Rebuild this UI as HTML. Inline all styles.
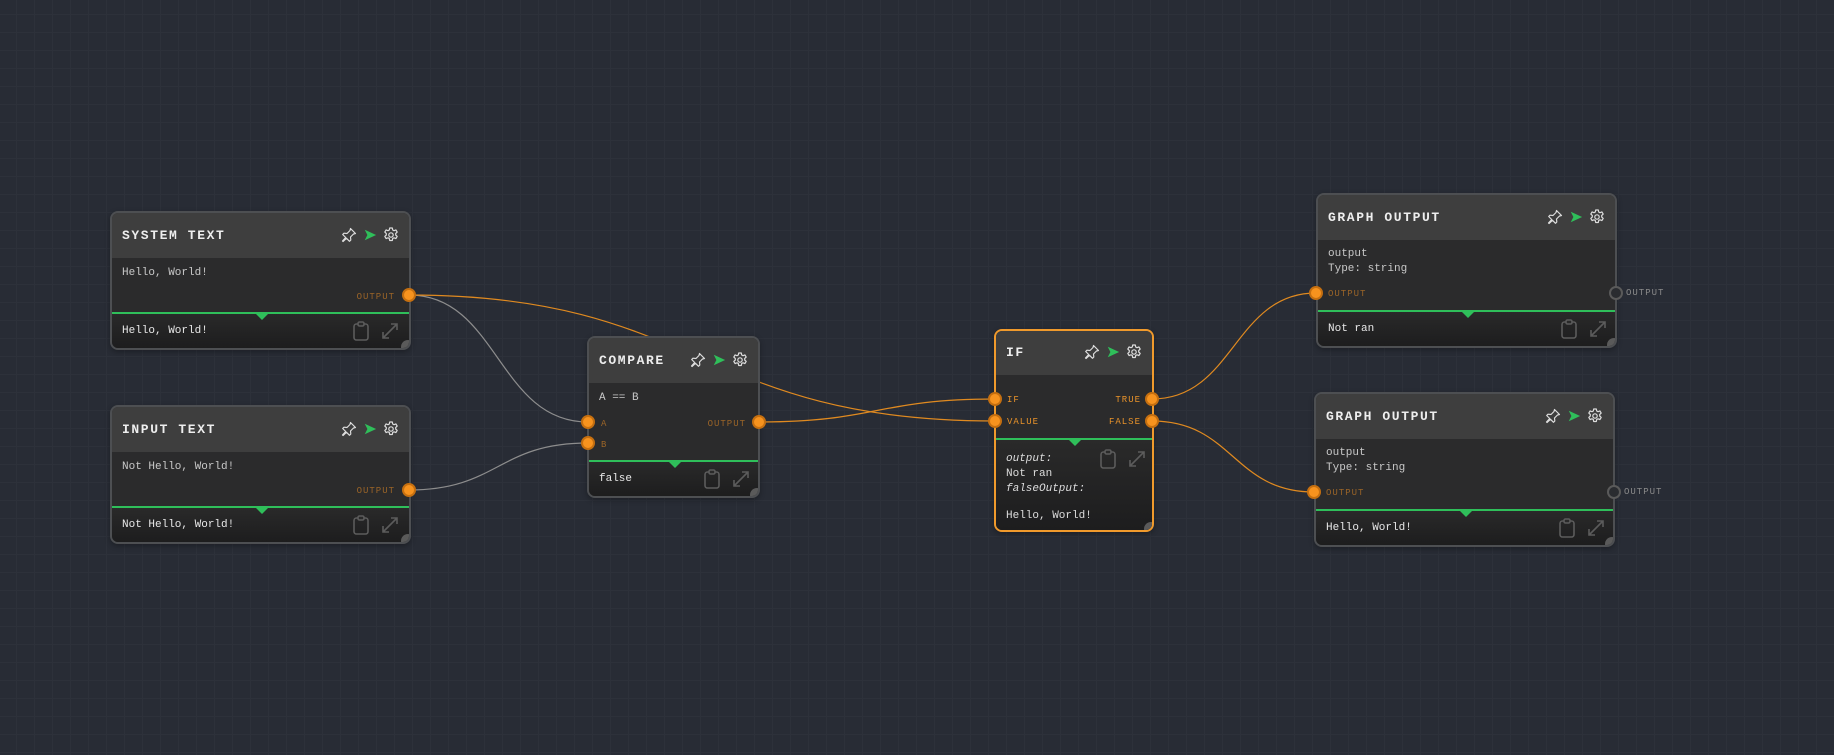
<!DOCTYPE html>
<html><head><meta charset="utf-8"><style>
*{margin:0;padding:0;box-sizing:border-box}
body{width:1834px;height:755px;overflow:hidden;background:#282c35;font-family:"Liberation Mono","DejaVu Sans Mono",monospace;position:relative;
background-image:linear-gradient(#2d313a 1px,transparent 1px),linear-gradient(90deg,#2d313a 1px,transparent 1px);background-size:18px 18px;background-position:-2px -4px}
.n{position:absolute;border:2px solid #4d4f52;border-radius:8px;background:#2b2b2c;overflow:hidden;box-shadow:0 2px 6px rgba(0,0,0,.3)}
.n.sel{border-color:#f09a2c}
.h{position:absolute;left:0;right:0;top:0;background:#3e3e3e}
.t{position:absolute;left:10px;color:#eee;font-weight:bold;font-size:13px;letter-spacing:1.6px}
.ic{position:absolute;right:10px;display:flex;gap:6px;align-items:center}
.tx{position:absolute;left:10px;color:#c8c8c8;font-size:11px;line-height:15px}
.pl{position:absolute;font-size:9px;letter-spacing:1px;color:#9a6428}
.g{position:absolute;left:0;right:0;height:2px;background:#2fbf5a}
.tri{position:absolute;width:0;height:0;border-left:7px solid transparent;border-right:7px solid transparent;border-top:7px solid #2fbf5a}
.f{position:absolute;left:0;right:0;bottom:0;background:linear-gradient(#2a2a2a,#1d1d1e)}
.ft{position:absolute;left:10px;color:#e8e8e8;font-size:11px}
.rs{position:absolute;right:-6px;bottom:-6px;width:14px;height:14px;border-radius:50%;background:#5a5a5a}
.p{position:absolute;width:14px;height:14px;border-radius:50%;background:#f7931e;border:2px solid #c56f10}
.pe{position:absolute;width:14px;height:14px;border-radius:50%;border:2px solid #5a5a5a;background:#2a2c30}
.fi{position:absolute;display:flex;gap:12px;align-items:center}
</style></head><body>
<svg width="1834" height="755" style="position:absolute;left:0;top:0" fill="none" stroke-width="1.2">
<path d="M409 295 C498 295 498 422 588 422" stroke="#8d8d8d"/>
<path d="M409 490 C498 490 498 443 588 443" stroke="#8d8d8d"/>
<path d="M409 295 C700 295 700 421 995 421" stroke="#e08a20"/>
<path d="M759 422 C877 422 877 399 995 399" stroke="#e08a20"/>
<path d="M1152 399 C1234 399 1234 293 1316 293" stroke="#e08a20"/>
<path d="M1152 421 C1233 421 1233 492 1314 492" stroke="#e08a20"/>
</svg>

<svg width="0" height="0" style="position:absolute"><defs>
<symbol id="pin" viewBox="0 0 16 16"><path d="M9.5 1.5l5 5-2 .5-3 3 .3 3-1.3 1.3-3-3L2 14.5l-.5-.5 3.2-3.5-3-3L3 6.2l3 .3 3-3z" fill="none" stroke="#ddd" stroke-width="1.2" stroke-linejoin="round"/></symbol>
<symbol id="play" viewBox="0 0 16 16"><path d="M2 2l13 6-13 6 3-6z" fill="#2fbf5a"/></symbol>
<symbol id="gear" viewBox="0 0 16 16"><path d="M6.7 1h2.6l.4 2 1.3.7 1.9-.8 1.3 2.2-1.5 1.4v1.5l1.5 1.4-1.3 2.2-1.9-.8-1.3.7-.4 2H6.7l-.4-2-1.3-.7-1.9.8-1.3-2.2 1.5-1.4V6.5L1.8 5.1l1.3-2.2 1.9.8 1.3-.7z" fill="none" stroke="#ddd" stroke-width="1.2" stroke-linejoin="round"/><circle cx="8" cy="8" r="2.2" fill="none" stroke="#ddd" stroke-width="1.2"/></symbol>
<symbol id="clip" viewBox="0 0 16 20"><rect x="1" y="3" width="14" height="16" rx="2.5" fill="none" stroke="#5c5c5c" stroke-width="1.6"/><rect x="5" y="1" width="6" height="4" rx="1.5" fill="#2a2a2a" stroke="#5c5c5c" stroke-width="1.6"/></symbol>
<symbol id="exp" viewBox="0 0 18 18"><path d="M2 16L16 2M10 2h6v6M2 10v6h6" fill="none" stroke="#5c5c5c" stroke-width="1.6"/></symbol>
</defs></svg>

<!-- SYSTEM TEXT -->
<div class="n" style="left:110px;top:211px;width:301px;height:139px">
 <div class="h" style="height:45px"><div class="t" style="top:15px">SYSTEM TEXT</div>
 <div class="ic" style="top:14px"><svg width="16" height="16"><use href="#pin"/></svg><svg width="14" height="14"><use href="#play"/></svg><svg width="16" height="16"><use href="#gear"/></svg></div></div>
 <div class="tx" style="top:53px">Hello, World!</div>
 <div class="pl" style="right:14px;top:79px">OUTPUT</div>
 <div class="f" style="top:100px"><div class="ft" style="top:12px">Hello, World!</div>
 <div class="fi" style="right:10px;top:8px"><svg width="16" height="20"><use href="#clip"/></svg><svg width="18" height="18"><use href="#exp"/></svg></div></div>
 <div class="g" style="top:99px"></div><div class="tri" style="left:143px;top:100px"></div>
 <div class="rs"></div>
</div>
<div class="p" style="left:402px;top:288px"></div>

<!-- INPUT TEXT -->
<div class="n" style="left:110px;top:405px;width:301px;height:139px">
 <div class="h" style="height:45px"><div class="t" style="top:15px">INPUT TEXT</div>
 <div class="ic" style="top:14px"><svg width="16" height="16"><use href="#pin"/></svg><svg width="14" height="14"><use href="#play"/></svg><svg width="16" height="16"><use href="#gear"/></svg></div></div>
 <div class="tx" style="top:53px">Not Hello, World!</div>
 <div class="pl" style="right:14px;top:79px">OUTPUT</div>
 <div class="f" style="top:100px"><div class="ft" style="top:12px">Not Hello, World!</div>
 <div class="fi" style="right:10px;top:8px"><svg width="16" height="20"><use href="#clip"/></svg><svg width="18" height="18"><use href="#exp"/></svg></div></div>
 <div class="g" style="top:99px"></div><div class="tri" style="left:143px;top:100px"></div>
 <div class="rs"></div>
</div>
<div class="p" style="left:402px;top:483px"></div>

<!-- COMPARE -->
<div class="n" style="left:587px;top:336px;width:173px;height:162px">
 <div class="h" style="height:45px"><div class="t" style="top:15px">COMPARE</div>
 <div class="ic" style="top:14px"><svg width="16" height="16"><use href="#pin"/></svg><svg width="14" height="14"><use href="#play"/></svg><svg width="16" height="16"><use href="#gear"/></svg></div></div>
 <div class="tx" style="top:53px">A == B</div>
 <div class="pl" style="left:12px;top:81px">A</div>
 <div class="pl" style="left:12px;top:102px">B</div>
 <div class="pl" style="right:12px;top:81px">OUTPUT</div>
 <div class="f" style="top:123px"><div class="ft" style="top:12px">false</div>
 <div class="fi" style="right:8px;top:8px"><svg width="16" height="20"><use href="#clip"/></svg><svg width="18" height="18"><use href="#exp"/></svg></div></div>
 <div class="g" style="top:122px"></div><div class="tri" style="left:79px;top:123px"></div>
 <div class="rs"></div>
</div>
<div class="p" style="left:581px;top:415px"></div>
<div class="p" style="left:581px;top:436px"></div>
<div class="p" style="left:752px;top:415px"></div>

<!-- IF -->
<div class="n sel" style="left:994px;top:329px;width:160px;height:203px">
 <div class="h" style="height:44px"><div class="t" style="top:14px">IF</div>
 <div class="ic" style="top:13px"><svg width="16" height="16"><use href="#pin"/></svg><svg width="14" height="14"><use href="#play"/></svg><svg width="16" height="16"><use href="#gear"/></svg></div></div>
 <div class="pl" style="left:11px;top:64px;color:#e8922a">IF</div>
 <div class="pl" style="left:11px;top:86px;color:#e8922a">VALUE</div>
 <div class="pl" style="right:11px;top:64px;color:#e8922a">TRUE</div>
 <div class="pl" style="right:11px;top:86px;color:#e8922a">FALSE</div>
 <div class="f" style="top:108px">
 <div class="ft" style="top:13px;line-height:15px;color:#ddd"><i>output:</i><br>Not ran<br><i>falseOutput:</i><br><div style="height:12px"></div>Hello, World!</div>
 <div class="fi" style="right:6px;top:10px"><svg width="16" height="20"><use href="#clip"/></svg><svg width="18" height="18"><use href="#exp"/></svg></div></div>
 <div class="g" style="top:107px"></div><div class="tri" style="left:72px;top:108px"></div>
 <div class="rs"></div>
</div>
<div class="p" style="left:988px;top:392px"></div>
<div class="p" style="left:988px;top:414px"></div>
<div class="p" style="left:1145px;top:392px"></div>
<div class="p" style="left:1145px;top:414px"></div>

<!-- GRAPH OUTPUT 1 -->
<div class="n" style="left:1316px;top:193px;width:301px;height:155px">
 <div class="h" style="height:45px"><div class="t" style="top:15px">GRAPH OUTPUT</div>
 <div class="ic" style="top:14px"><svg width="16" height="16"><use href="#pin"/></svg><svg width="14" height="14"><use href="#play"/></svg><svg width="16" height="16"><use href="#gear"/></svg></div></div>
 <div class="tx" style="top:52px">output<br>Type: string</div>
 <div class="pl" style="left:10px;top:94px">OUTPUT</div>
 <div class="f" style="top:116px"><div class="ft" style="top:12px">Not ran</div>
 <div class="fi" style="right:8px;top:8px"><svg width="16" height="20"><use href="#clip"/></svg><svg width="18" height="18"><use href="#exp"/></svg></div></div>
 <div class="g" style="top:115px"></div><div class="tri" style="left:143px;top:116px"></div>
 <div class="rs"></div>
</div>
<div class="p" style="left:1309px;top:286px"></div>
<div class="pe" style="left:1609px;top:286px"></div>
<div class="pl" style="left:1626px;top:288px;color:#8a8a8a">OUTPUT</div>

<!-- GRAPH OUTPUT 2 -->
<div class="n" style="left:1314px;top:392px;width:301px;height:155px">
 <div class="h" style="height:45px"><div class="t" style="top:15px">GRAPH OUTPUT</div>
 <div class="ic" style="top:14px"><svg width="16" height="16"><use href="#pin"/></svg><svg width="14" height="14"><use href="#play"/></svg><svg width="16" height="16"><use href="#gear"/></svg></div></div>
 <div class="tx" style="top:52px">output<br>Type: string</div>
 <div class="pl" style="left:10px;top:94px">OUTPUT</div>
 <div class="f" style="top:116px"><div class="ft" style="top:12px">Hello, World!</div>
 <div class="fi" style="right:8px;top:8px"><svg width="16" height="20"><use href="#clip"/></svg><svg width="18" height="18"><use href="#exp"/></svg></div></div>
 <div class="g" style="top:115px"></div><div class="tri" style="left:143px;top:116px"></div>
 <div class="rs"></div>
</div>
<div class="p" style="left:1307px;top:485px"></div>
<div class="pe" style="left:1607px;top:485px"></div>
<div class="pl" style="left:1624px;top:487px;color:#8a8a8a">OUTPUT</div>
</body></html>
